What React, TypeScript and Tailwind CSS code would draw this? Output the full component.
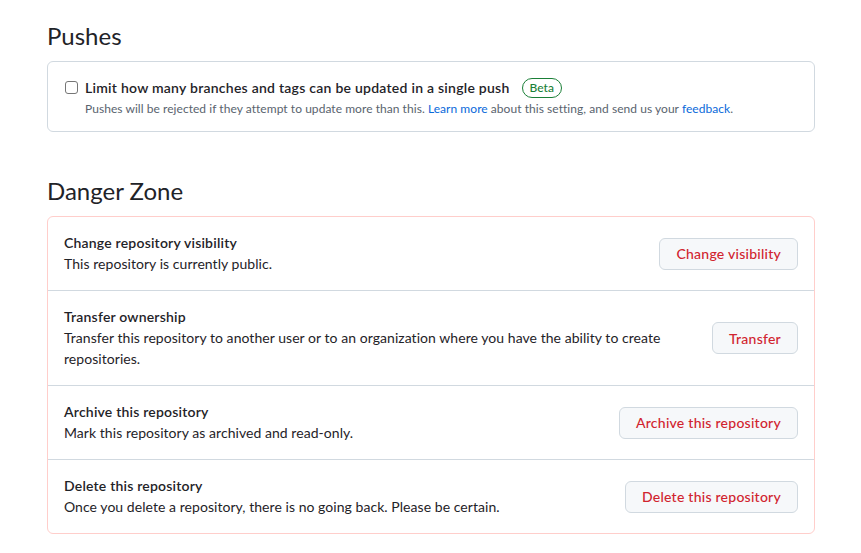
import { ReactNode } from "react";

type DangerRow = {
  title: string;
  description: ReactNode;
  action: string;
};

const rows: DangerRow[] = [
  {
    title: "Change repository visibility",
    description: "This repository is currently public.",
    action: "Change visibility",
  },
  {
    title: "Transfer ownership",
    description:
      "Transfer this repository to another user or to an organization where you have the ability to create repositories.",
    action: "Transfer",
  },
  {
    title: "Archive this repository",
    description: "Mark this repository as archived and read-only.",
    action: "Archive this repository",
  },
  {
    title: "Delete this repository",
    description: "Once you delete a repository, there is no going back. Please be certain.",
    action: "Delete this repository",
  },
];

export default function App() {
  return (
    <div className="min-h-screen bg-white font-['Segoe_UI','Lato',sans-serif] text-[#1f2328]">
      <div className="w-[768px] ml-[47px] pt-[21px]">
        <h2 className="text-[24px] leading-[30px] font-normal">Pushes</h2>
        <div className="mt-[10px] border border-[#d1d9e0] rounded-md px-4 pt-[15px] pb-[13px]">
          <div className="flex items-start gap-[7px] pl-[1px]">
            <input
              type="checkbox"
              className="mt-[4px] w-[13px] h-[13px] appearance-none border border-[#767676] rounded-[3px] bg-white shrink-0"
            />
            <div>
              <div className="flex items-center gap-3 text-[14px] leading-[21px] font-semibold">
                <span className="tracking-[0.25px]">
                  Limit how many branches and tags can be updated in a single push
                </span>
                <span className="border border-[#1a7f37] text-[#1a7f37] rounded-full px-[7px] text-[12px] leading-[18px] font-medium">
                  Beta
                </span>
              </div>
              <p className="mt-[2px] text-[12px] leading-[18px] text-[#59636e] tracking-[0.05px]">
                Pushes will be rejected if they attempt to update more than this.{" "}
                <a className="text-[#0969da]">Learn more</a> about this setting, and send us your{" "}
                <a className="text-[#0969da]">feedback</a>.
              </p>
            </div>
          </div>
        </div>

        <h2 className="mt-[44px] text-[24px] leading-[30px] font-normal">Danger Zone</h2>
        <div className="mt-[10px] border border-[#ffcecb] rounded-md">
          {rows.map((row, idx) => (
            <div
              key={idx}
              className={
                "flex items-center justify-between gap-4 p-4" +
                (idx > 0 ? " border-t border-[#d1d9e0]" : "")
              }
            >
              <div className="flex-1 text-[14px] pr-8">
                <div className="font-semibold leading-[20px] tracking-[0.2px]">{row.title}</div>
                <div className="leading-[21px] tracking-[0.05px]">{row.description}</div>
              </div>
              <button className="shrink-0 h-8 px-4 rounded-md border border-[#d1d9e0] bg-[#f6f8fa] text-[#d1242f] text-[14px] font-medium tracking-[0.25px]">
                {row.action}
              </button>
            </div>
          ))}
        </div>
      </div>
    </div>
  );
}
